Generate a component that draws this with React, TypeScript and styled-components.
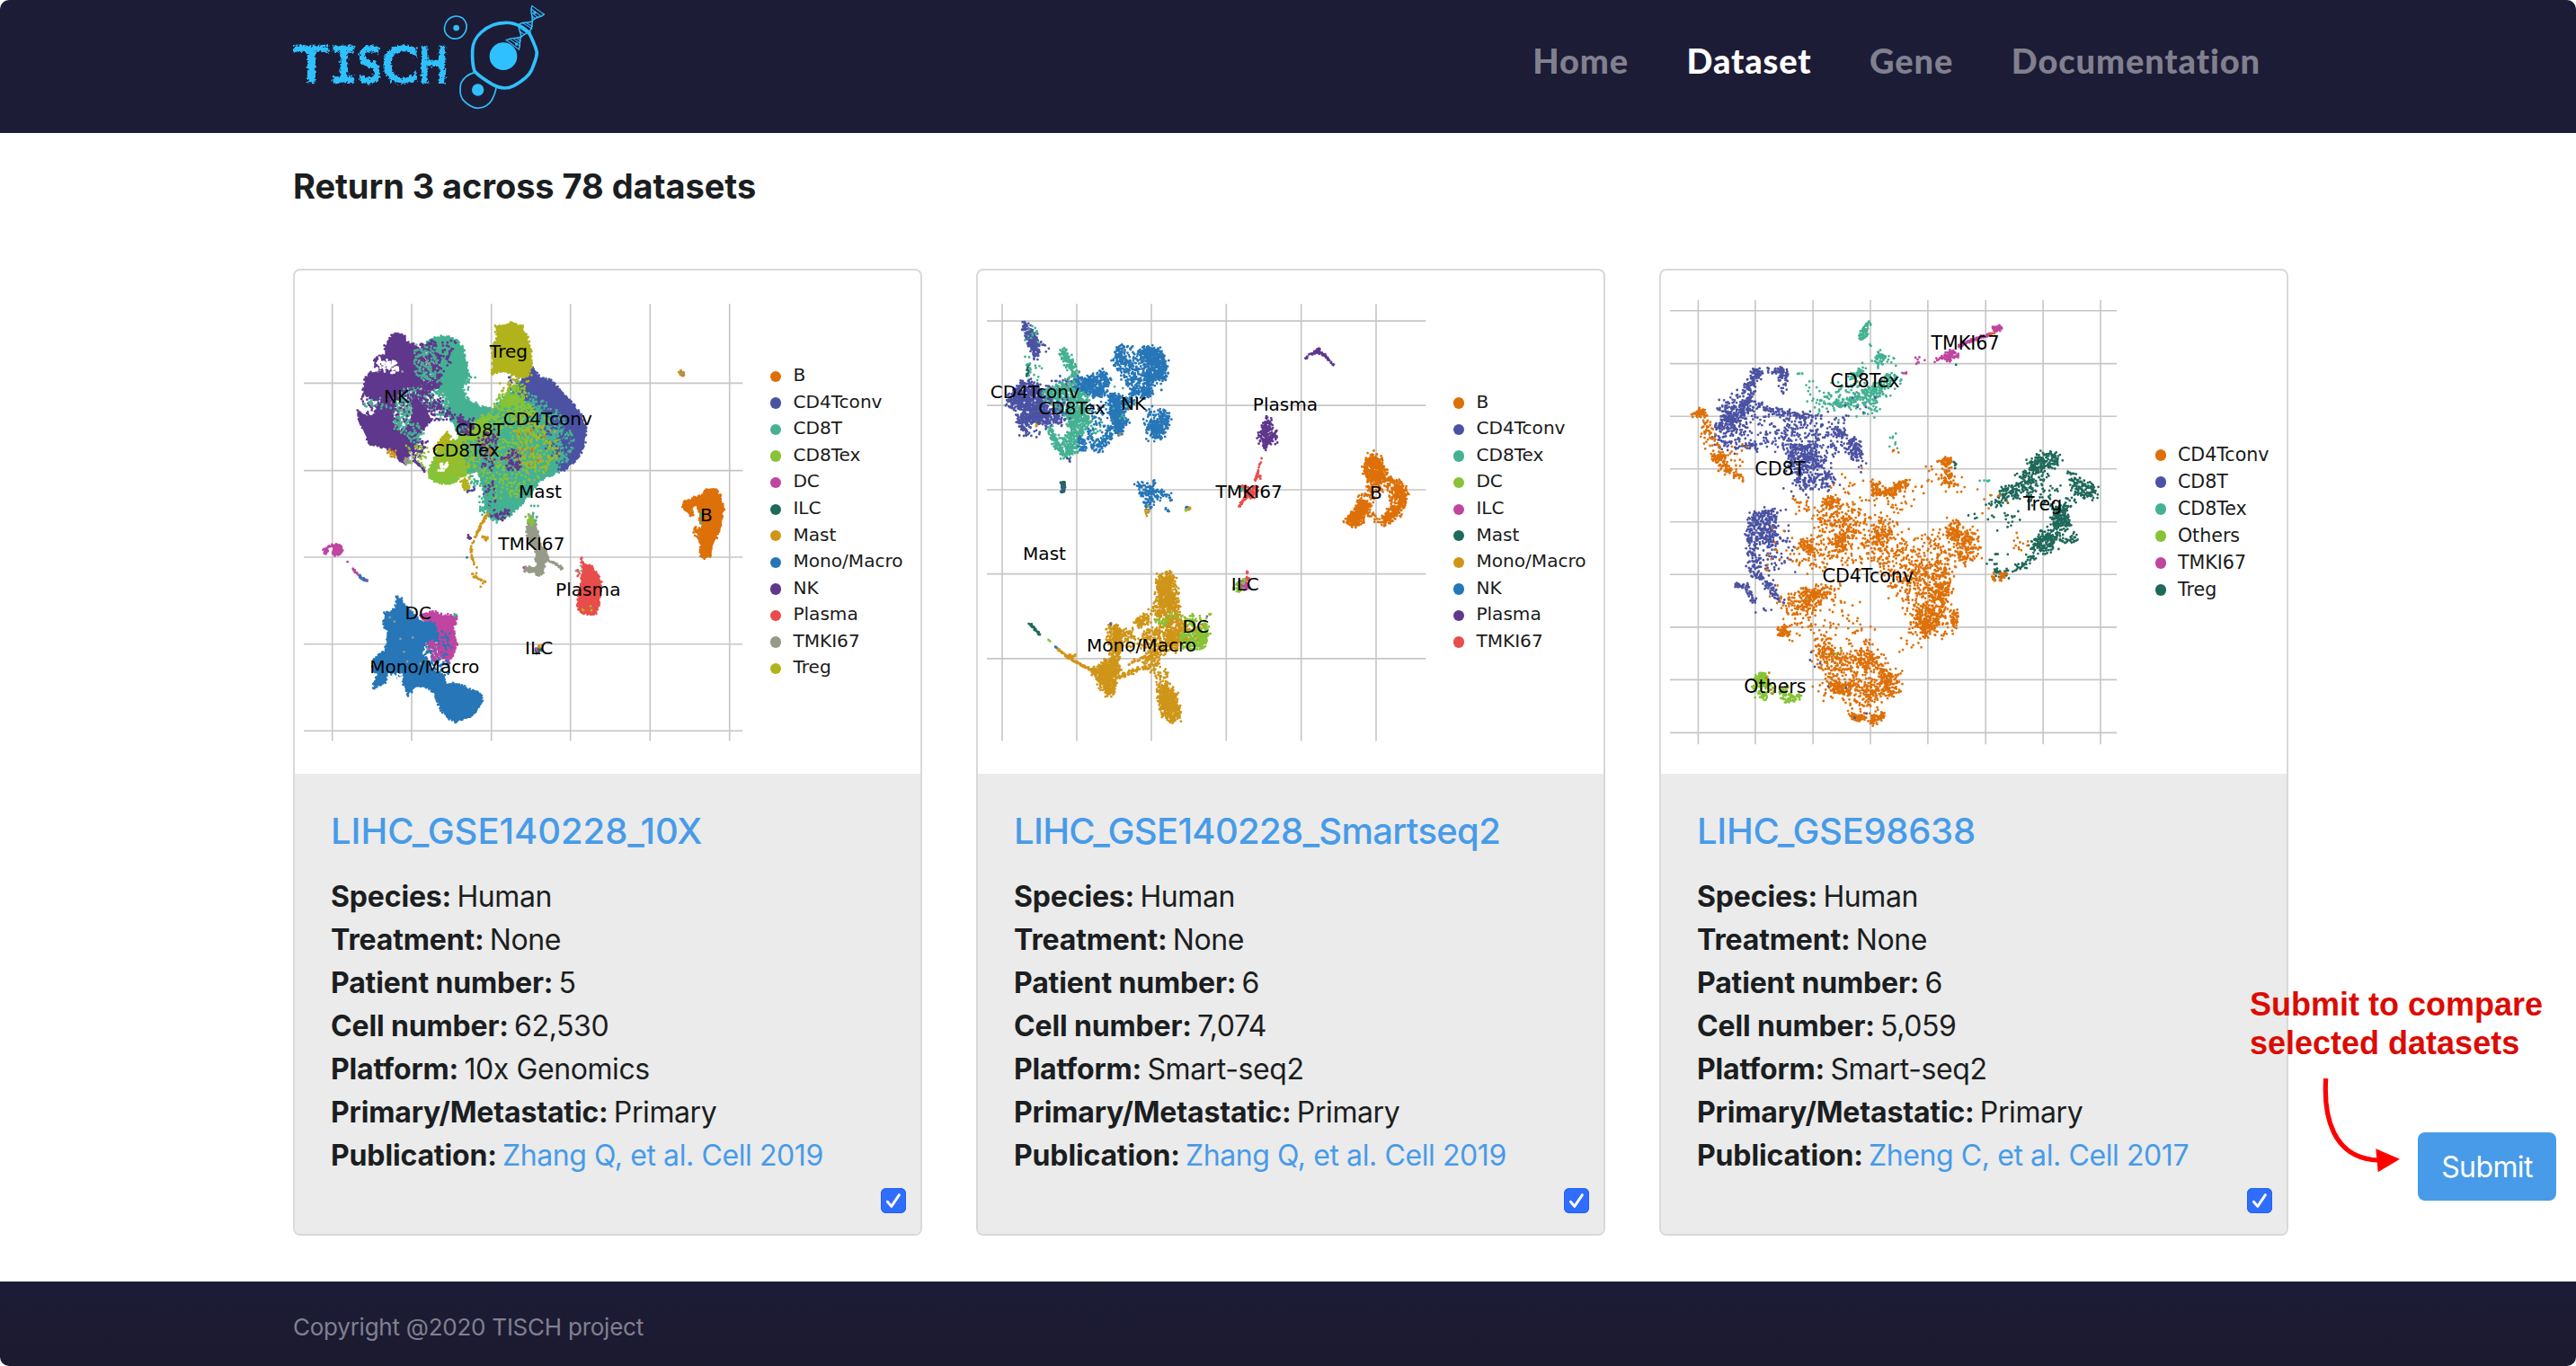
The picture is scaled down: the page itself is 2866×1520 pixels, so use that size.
import React from 'react';
import styled, { createGlobalStyle } from 'styled-components';

const NAVY = '#1d1c36';
const BLUE = '#479be8';
const INK = '#1b1e21';
const SANS = `Inter, 'Liberation Sans', sans-serif`;

/* ---------- palette ---------- */
const C = {
  orange: '#dd7008',
  indigo: '#4b52a3',
  teal: '#45b193',
  green: '#87c336',
  magenta: '#bf45a0',
  pine: '#1f695a',
  gold: '#cf9518',
  blue: '#2676b8',
  purple: '#5f378c',
  red: '#e84d4b',
  grey: '#959b88',
  olive: '#b1b31c',
  white: '#ffffff',
};

/* ---------- scatter engine ---------- */
type Pt = [number, number];
type Layer = { kind: 'solid' | 'dots' | 'line'; color: string; pts: Pt[]; n: number; j: number };

const parse = (s: string): Pt[] => s.trim().split(/\s+/).map((p) => p.split(',').map(Number) as Pt);
/* solid: a filled cloud with a rough rim; dots: cells spread in an area; line: cells along a trail */
const S = (color: string, s: string, j = 5): Layer => ({ kind: 'solid', color, pts: parse(s), n: 0, j });
const D = (color: string, n: number, s: string): Layer => ({ kind: 'dots', color, pts: parse(s), n, j: 0 });
const L = (color: string, n: number, j: number, s: string): Layer => ({ kind: 'line', color, pts: parse(s), n, j });

function makeRandom(seed: number) {
  let a = seed;
  return () => {
    a = (a + 0x6d2b79f5) | 0;
    let t = Math.imul(a ^ (a >>> 15), 1 | a);
    t = (t + Math.imul(t ^ (t >>> 7), 61 | t)) ^ t;
    return ((t ^ (t >>> 14)) >>> 0) / 4294967296;
  };
}

function inside(x: number, y: number, poly: Pt[]) {
  let hit = false;
  for (let i = 0, k = poly.length - 1; i < poly.length; k = i++) {
    const [xi, yi] = poly[i];
    const [xk, yk] = poly[k];
    if (yi > y !== yk > y && x < ((xk - xi) * (y - yi)) / (yk - yi) + xi) hit = !hit;
  }
  return hit;
}

function along(pts: Pt[], n: number, j: number, closed: boolean, rnd: () => number): Pt[] {
  const path = closed ? [...pts, pts[0]] : pts;
  const lens = path.slice(1).map((p, i) => Math.hypot(p[0] - path[i][0], p[1] - path[i][1]));
  const total = lens.reduce((a, b) => a + b, 0);
  const count = n || Math.round(total / 4.5);
  const out: Pt[] = [];
  for (let q = 0; q < count; q++) {
    let d = rnd() * total;
    let i = 0;
    while (i < lens.length - 1 && d > lens[i]) d -= lens[i++];
    const t = d / (lens[i] || 1);
    const g = () => (rnd() + rnd() - 1) * j;
    out.push([path[i][0] + (path[i + 1][0] - path[i][0]) * t + g(), path[i][1] + (path[i + 1][1] - path[i][1]) * t + g()]);
  }
  return out;
}

function scatter(layer: Layer, spread: number, rnd: () => number): Pt[] {
  if (layer.kind !== 'dots') return along(layer.pts, layer.n, layer.j, layer.kind === 'solid', rnd);
  const xs = layer.pts.map((p) => p[0]);
  const ys = layer.pts.map((p) => p[1]);
  const [x0, x1, y0, y1] = [Math.min(...xs), Math.max(...xs), Math.min(...ys), Math.max(...ys)];
  /* small areas stay crisp, large ones get soft borders */
  const soft = Math.min(spread, Math.min(x1 - x0, y1 - y0) * 0.25);
  const g = () => (rnd() + rnd() + rnd() - 1.5) * soft;
  const out: Pt[] = [];
  let guard = 0;
  while (out.length < layer.n && guard++ < layer.n * 30) {
    const x = x0 + rnd() * (x1 - x0);
    const y = y0 + rnd() * (y1 - y0);
    if (inside(x, y, layer.pts)) out.push([x + g(), y + g()]);
  }
  return out;
}

/* ---------- plot data ---------- */
type Label = [string, number, number];
type Plot = {
  sx: number;
  font: number;
  seed: number;
  spread: number;
  frame: [number, number, number, number];
  v: number[];
  h: number[];
  layers: Layer[];
  labels: Label[];
};

const plot10x: Plot = {
  sx: 3,
  font: 20.1,
  seed: 11,
  spread: 8,
  frame: [54, 1519, 134, 1497],
  v: [149, 414, 680, 944, 1210, 1475],
  h: [382, 654, 924, 1195, 1465],
  layers: [
    S(C.teal, '490,238 530,236 565,248 585,275 598,320 602,345 585,385 578,405 590,430 640,455 690,465 720,430 760,400 800,380 850,430 900,520 945,590 925,650 840,685 815,720 780,760 740,795 700,812 675,800 655,730 645,680 600,600 560,520 535,480 540,430 505,400 495,360 510,330 490,290 460,262'),
    S(C.indigo, '815,335 840,362 880,375 910,405 950,445 980,480 996,525 990,575 965,620 920,655 905,650 930,600 900,560 905,520 870,480 820,440 770,415 745,400 785,370'),
    D(C.teal, 330, '780,410 830,420 880,450 930,500 960,560 940,620 900,640 840,560 790,470'),
    D(C.indigo, 120, '760,400 860,420 930,500 970,560 910,650 840,560 790,480'),
    D(C.indigo, 40, '740,350 810,320 840,360 800,390 740,400'),
    S(C.olive, '693,203 720,200 740,194 780,203 798,235 812,280 815,325 800,362 762,358 725,342 684,352 685,320 683,270 700,240'),
    D(C.olive, 34, '720,345 830,320 800,390 740,420 710,430'),
    D(C.green, 40, '690,440 750,370 800,380 790,440 700,480'),
    S(C.green, '715,440 755,420 790,440 770,470 715,500 690,520 670,550 665,590 630,620 640,650 600,665 570,675 555,695 520,694 490,685 468,668 485,625 500,590 520,560 560,560 600,530 640,490 690,480'),
    D(C.green, 110, '690,440 760,380 800,400 790,440 700,480'),
    D(C.green, 420, '640,480 760,430 850,520 900,600 840,680 760,740 690,740 640,650'),
    D(C.green, 160, '720,440 800,430 830,480 740,500'),
    D(C.teal, 90, '690,450 790,440 800,500 700,560 670,520'),
    D(C.olive, 110, '790,460 900,520 920,600 860,660 780,660 740,520'),
    D(C.olive, 90, '540,560 660,560 640,660 580,690 490,660'),
    S(C.olive, '500,570 532,534 545,545 535,575 510,590', 4),
    S(C.olive, '585,680 600,690 605,715 592,718 585,700', 4),
    L(C.indigo, 10, 5, '600,722 625,708'),
    D(C.teal, 40, '600,640 650,640 645,700 610,700'),
    D(C.teal, 90, '590,560 660,560 660,640 600,660'),
    D(C.olive, 14, '470,590 540,560 500,640'),
    D(C.white, 26, '508,632 535,628 528,652 505,652'),
    D(C.purple, 90, '640,540 700,520 690,660 650,640 640,590'),
    D(C.purple, 70, '710,600 770,590 780,655 730,660'),
    D(C.purple, 40, '650,690 690,690 700,800 670,790'),
    D(C.purple, 30, '690,790 740,770 735,790 700,810'),
    D(C.purple, 70, '560,480 620,490 620,540 580,540'),
    D(C.teal, 70, '640,740 690,700 680,790 650,790'),
    D(C.orange, 14, '640,560 880,500 860,680 680,660'),
    D(C.grey, 20, '600,570 860,600 840,700 640,680'),
    D(C.teal, 60, '575,350 610,345 620,375 590,400 600,430 640,450 580,440'),
    D(C.teal, 230, '400,390 520,370 550,470 530,500 450,460'),
    D(C.teal, 190, '350,430 410,400 420,480 400,560 360,520'),
    S(C.purple, '340,242 356,228 385,228 398,255 420,262 440,285 445,320 435,345 455,365 440,385 400,395 380,420 330,430 290,432 252,415 258,375 275,348 300,350 315,340 288,325 292,305 325,295 325,270'),
    S(C.purple, '236,462 245,480 290,485 300,450 330,430 350,450 350,500 375,540 400,520 415,500 420,450 415,430 440,440 460,460 480,495 450,530 430,550 430,575 405,600 402,632 385,632 350,592 300,577 275,572 255,535 240,500'),
    D(C.white, 60, '340,312 368,312 375,340 350,348 325,340 328,325'),
    D(C.white, 18, '297,318 310,308 325,320 318,338'),
    D(C.purple, 130, '340,410 430,390 440,450 400,560 350,520'),
    D(C.purple, 44, '245,425 330,420 320,470 250,475'),
    D(C.teal, 40, '345,410 400,400 415,480 400,560 355,520'),
    D(C.purple, 620, '420,270 490,252 505,300 505,390 450,420 420,380'),
    D(C.purple, 60, '480,250 560,250 540,330 500,390'),
    D(C.purple, 120, '420,400 520,430 560,500 470,500 420,450'),
    D(C.purple, 80, '390,560 470,560 440,620 390,600'),
    D(C.teal, 130, '420,280 500,262 500,380 430,360'),
    D(C.teal, 40, '400,510 450,510 440,570 400,560'),
    D(C.teal, 20, '250,440 330,420 330,460 270,460'),
    L(C.purple, 30, 7, '530,470 560,490 620,520'),
    L(C.purple, 26, 5, '422,622 458,655'),
    L(C.purple, 24, 8, '365,600 400,632'),
    D(C.gold, 22, '335,590 360,598 355,612 340,606'),
    D(C.grey, 22, '385,625 410,615 410,632 395,638'),
    D(C.green, 28, '400,580 480,570 460,650 410,620'),
    D(C.grey, 10, '330,260 480,260 460,600 340,560'),
    L(C.gold, 66, 4, '670,785 645,825 625,865 612,895 616,930 626,945'),
    L(C.gold, 26, 5, '618,975 635,992 664,1003'),
    D(C.gold, 10, '650,860 665,862 664,876'),
    D(C.gold, 5, '625,905 640,950 655,1020 650,1025 625,955'),
    L(C.purple, 8, 4, '600,856 612,868'),
    L(C.blue, 1, 1, '598,925 599,926'),
    S(C.grey, '808,790 820,800 832,830 842,880 862,905 868,930 858,945 855,970 840,983 820,968 790,968 790,955 832,955 828,900 800,860 800,830', 4),
    L(C.grey, 34, 4, '865,935 895,945 918,962'),
    D(C.green, 16, '800,790 830,800 825,830 800,820'),
    D(C.teal, 8, '815,740 845,780 835,810 815,790'),
    L(C.magenta, 1, 1, '787,956 788,957'),
    S(C.red, '978,925 990,942 1010,950 1035,975 1046,1000 1044,1030 1040,1070 1028,1100 990,1100 970,1090 970,1050 982,1000 988,965', 4),
    D(C.grey, 5, '962,950 980,955 985,975 960,968'),
    D(C.red, 6, '965,960 985,965 985,1010 970,1000'),
    D(C.olive, 5, '972,1090 1020,1075 1015,1100'),
    S(C.magenta, '150,885 170,884 184,890 182,910 160,920 145,905 122,915 122,900 135,892', 4),
    D(C.white, 12, '135,900 145,897 150,915 135,915'),
    L(C.magenta, 1, 1, '199,938 200,939'),
    L(C.magenta, 30, 3, '218,960 245,990 275,1000'),
    L(C.blue, 12, 4, '238,980 262,1000'),
    S(C.magenta, '440,1110 480,1092 515,1105 560,1106 562,1125 550,1150 566,1190 552,1230 530,1250 505,1215 498,1180 480,1130'),
    D(C.magenta, 70, '470,1190 520,1190 540,1250 480,1250'),
    S(C.blue, '365,1050 380,1052 388,1075 415,1095 440,1125 490,1130 500,1160 500,1182 460,1190 450,1225 470,1270 520,1290 530,1318 570,1320 640,1350 648,1368 630,1410 600,1425 560,1435 535,1425 510,1395 490,1350 470,1330 430,1328 415,1340 402,1352 392,1330 380,1300 340,1300 320,1320 288,1330 290,1310 300,1290 285,1265 290,1240 325,1215 335,1190 335,1155 320,1130 325,1100 362,1085'),
    D(C.blue, 110, '450,1190 520,1180 540,1260 540,1310 470,1300'),
    D(C.magenta, 40, '470,1180 520,1190 510,1260 470,1240'),
    D(C.white, 34, '335,1290 380,1290 380,1310 340,1310'),
    D(C.blue, 14, '500,1130 545,1160 540,1230'),
    D(C.grey, 8, '330,1090 460,1190 480,1260 400,1250'),
    S(C.orange, '1400,710 1430,714 1446,738 1455,770 1448,810 1436,850 1418,890 1412,920 1392,928 1378,920 1378,880 1382,830 1375,790 1362,762 1345,765 1338,785 1318,768 1325,750 1350,742 1385,730', 4),
    D(C.orange, 22, '1338,765 1352,770 1352,800 1340,795'),
    D(C.orange, 36, '1355,830 1380,835 1380,880 1358,860'),
    D(C.teal, 4, '1365,785 1382,780 1385,835'),
    D(C.gold, 20, '1308,345 1322,345 1322,358 1308,358'),
    D(C.orange, 6, '1308,345 1322,345 1322,358 1308,358'),
    D(C.grey, 5, '1310,348 1320,348 1320,356 1310,356'),
    D(C.pine, 16, '828,1208 845,1208 845,1222 828,1222'),
    D(C.magenta, 5, '824,1206 834,1206 834,1214 824,1214'),
    D(C.gold, 5, '838,1196 848,1196 846,1206 838,1206'),
    D(C.teal, 3, '556,1094 563,1094 563,1114 556,1114'),
  ],
  labels: [
    ['Treg', 738, 303], ['NK', 363, 443], ['CD4Tconv', 868, 513], ['CD8T', 641, 546], ['CD8Tex', 595, 611],
    ['Mast', 843, 740], ['B', 1398, 812], ['TMKI67', 814, 901], ['Plasma', 1003, 1045], ['DC', 436, 1116],
    ['ILC', 839, 1227], ['Mono/Macro', 457, 1285],
  ],
};

const plotSmart: Plot = {
  sx: 3,
  font: 20.1,
  seed: 23,
  spread: 12,
  frame: [54, 1519, 134, 1497],
  v: [105, 354, 603, 853, 1103, 1353],
  h: [188, 451, 714, 976, 1240],
  layers: [
    D(C.indigo, 190, '172,200 185,195 205,220 225,240 232,275 215,308 205,300 195,265 180,225'),
    D(C.teal, 14, '170,200 230,225 235,260 190,250'),
    D(C.pine, 14, '187,322 194,322 192,360 184,358'),
    D(C.teal, 16, '200,310 250,340 240,370 190,380 185,300'),
    D(C.indigo, 8, '160,230 280,270 270,305 240,280'),
    D(C.indigo, 620, '172,375 210,380 240,400 250,440 255,480 225,490 190,470 130,458 120,440 140,410'),
    D(C.indigo, 170, '155,480 230,470 230,505 190,510 190,550 175,540'),
    D(C.indigo, 120, '210,480 300,460 310,510 250,520'),
    D(C.indigo, 70, '250,380 350,345 370,370 400,370 380,410 270,420'),
    D(C.indigo, 10, '190,510 270,520 240,550 200,545'),
    D(C.teal, 130, '290,283 305,276 325,295 345,325 358,360 335,360 320,320'),
    D(C.teal, 520, '250,400 340,370 385,385 390,430 395,480 350,500 300,470 240,440'),
    D(C.teal, 360, '320,470 400,490 380,530 360,560 360,600 320,605 300,560 330,530'),
    D(C.teal, 120, '262,510 280,540 300,580 330,600 310,608 285,575 265,540'),
    D(C.teal, 26, '380,490 440,500 410,560 370,540'),
    D(C.indigo, 50, '240,420 330,430 330,510 250,500'),
    D(C.blue, 150, '485,275 512,260 518,300 545,320 560,338 520,342 480,340 470,325 485,305'),
    D(C.blue, 520, '570,275 615,272 640,290 652,320 650,375 620,372 600,380 580,360 595,340 575,310'),
    D(C.blue, 60, '520,265 580,270 590,340 540,340'),
    D(C.blue, 150, '500,340 590,340 600,400 590,430 560,420 530,400 510,380'),
    D(C.blue, 80, '580,370 610,380 600,430 570,430'),
    D(C.blue, 300, '370,380 400,360 450,345 465,380 440,425 410,420 385,405'),
    D(C.blue, 90, '350,360 400,370 390,410 350,400'),
    D(C.blue, 420, '460,420 490,420 500,470 518,500 500,542 480,520 465,480 470,440'),
    D(C.blue, 100, '490,430 560,400 550,430 510,480'),
    D(C.blue, 110, '440,560 455,530 475,515 470,545 450,570 440,590 410,592 400,575 430,570'),
    D(C.blue, 60, '400,440 460,440 460,500 440,560 370,580 400,500'),
    D(C.blue, 46, '360,540 385,560 385,592 360,590'),
    D(C.blue, 270, '618,470 655,475 662,495 650,530 620,555 605,540 590,515 620,500'),
    D(C.blue, 30, '585,460 620,450 610,560 583,550'),
    D(C.teal, 12, '440,380 560,400 540,500 450,500'),
    L(C.blue, 2, 2, '636,402 637,403'),
    D(C.gold, 3, '214,508 222,508 220,516'),
    D(C.gold, 2, '496,540 502,540 500,548'),
    D(C.indigo, 5, '315,610 332,622 328,626'),
    D(C.pine, 44, '303,690 313,685 317,722 302,722'),
    D(C.indigo, 4, '300,700 315,705 306,718'),
    D(C.blue, 160, '560,685 580,695 600,700 640,720 665,732 665,745 630,735 605,765 598,788 590,765 575,755 590,735 562,730'),
    D(C.blue, 6, '608,680 616,684 612,700'),
    D(C.blue, 6, '650,770 662,780 656,786'),
    D(C.gold, 9, '570,765 600,770 600,798 590,792'),
    D(C.gold, 12, '718,768 734,770 728,778'),
    D(C.green, 3, '714,778 722,778 718,784'),
    D(C.blue, 3, '718,768 724,768 724,774'),
    L(C.purple, 56, 4, '1117,306 1130,293 1158,284 1185,297 1211,326'),
    D(C.purple, 24, '1145,285 1160,271 1168,290'),
    D(C.purple, 210, '990,486 996,500 1008,520 1017,545 1012,570 995,568 992,580 976,580 972,560 960,550 970,525 982,505'),
    L(C.red, 5, 3, '973,612 964,640'),
    L(C.red, 28, 3, '962,645 950,685'),
    D(C.red, 8, '955,675 968,668 965,684'),
    D(C.red, 120, '905,700 930,715 955,700 950,730 920,735'),
    L(C.red, 30, 4, '920,735 896,766'),
    D(C.teal, 4, '900,700 912,705 906,728'),
    D(C.orange, 400, '1342,597 1350,606 1372,615 1378,645 1385,680 1360,690 1340,690 1318,672 1316,640 1326,615'),
    D(C.orange, 70, '1335,690 1400,672 1440,690 1400,705 1360,720'),
    D(C.orange, 190, '1415,695 1440,697 1455,725 1448,765 1430,760 1425,740 1410,720'),
    D(C.orange, 180, '1372,810 1400,775 1440,765 1425,795 1405,814 1370,818'),
    D(C.orange, 40, '1398,705 1430,735 1430,770 1395,775'),
    D(C.orange, 300, '1310,735 1332,765 1310,790 1298,815 1280,830 1256,815 1262,795 1290,770 1298,745'),
    D(C.orange, 34, '1300,790 1360,780 1365,815 1300,820'),
    D(C.orange, 30, '1320,700 1345,700 1345,750 1320,740'),
    D(C.magenta, 60, '900,998 930,1000 932,1022 905,1026 898,1010'),
    D(C.green, 36, '882,1005 912,990 905,1025 882,1038'),
    D(C.red, 4, '918,970 926,970 922,976'),
    D(C.red, 6, '918,985 930,990 926,998'),
    L(C.pine, 34, 4, '195,1130 230,1165'),
    L(C.green, 2, 2, '247,1175 265,1186'),
    L(C.blue, 5, 3, '283,1203 288,1208'),
    L(C.gold, 110, 4, '288,1208 330,1240 400,1274 425,1285'),
    D(C.gold, 14, '325,1230 350,1226 345,1245'),
    D(C.gold, 460, '440,1250 490,1240 495,1290 480,1325 478,1355 455,1350 430,1315 420,1285'),
    D(C.gold, 60, '400,1270 440,1265 430,1300 410,1295'),
    D(C.gold, 160, '462,1135 485,1135 500,1160 500,1200 480,1200 475,1160'),
    D(C.gold, 70, '460,1140 545,1160 520,1190 450,1200'),
    D(C.gold, 80, '475,1200 500,1200 490,1260 465,1250'),
    L(C.blue, 3, 3, '465,1132 468,1134'),
    D(C.gold, 400, '640,978 668,972 682,1000 690,1040 690,1080 660,1085 625,1060 618,1000'),
    D(C.gold, 180, '610,1060 690,1070 700,1110 650,1130 600,1100'),
    D(C.gold, 80, '540,1130 570,1105 600,1105 595,1130 560,1140'),
    D(C.gold, 180, '655,1110 710,1110 712,1160 680,1210 660,1170'),
    D(C.gold, 280, '570,1160 660,1130 690,1180 690,1215 640,1220 610,1245 590,1240 600,1200'),
    D(C.gold, 60, '500,1150 600,1150 590,1210 510,1210'),
    L(C.gold, 34, 8, '500,1300 520,1280 545,1245 600,1235'),
    L(C.gold, 34, 8, '515,1295 550,1273 600,1270'),
    D(C.gold, 70, '570,1230 640,1220 620,1290 580,1265'),
    D(C.gold, 50, '615,1290 655,1270 660,1340 630,1340'),
    D(C.gold, 490, '630,1330 655,1330 685,1350 698,1390 692,1432 670,1436 645,1420 632,1385'),
    D(C.green, 70, '700,1110 730,1104 790,1125 795,1150 760,1150 710,1130'),
    D(C.green, 280, '700,1165 735,1150 790,1150 785,1190 760,1205 710,1200'),
    D(C.green, 26, '615,1120 655,1115 655,1138 625,1135'),
    D(C.green, 9, '660,1090 705,1090 700,1115 660,1110'),
    D(C.gold, 18, '700,1130 780,1130 770,1190 710,1180'),
    L(C.green, 3, 3, '786,1102 803,1103'),
    L(C.magenta, 1, 1, '789,1108 790,1108'),
  ],
  labels: [
    ['CD4Tconv', 214, 427], ['CD8Tex', 338, 479], ['NK', 543, 466], ['Plasma', 1050, 467], ['TMKI67', 929, 738],
    ['B', 1353, 743], ['Mast', 246, 932], ['ILC', 916, 1028], ['DC', 751, 1159], ['Mono/Macro', 570, 1219],
  ],
};

const plotZheng: Plot = {
  sx: 2.958,
  font: 20.6,
  seed: 37,
  spread: 30,
  frame: [53, 1524, 123, 1507],
  v: [146, 334, 524, 713, 902, 1092, 1281, 1470],
  h: [156, 321, 485, 649, 814, 978, 1142, 1306, 1471],
  layers: [
    D(C.teal, 60, '700,182 710,190 700,230 690,248 674,242 685,215'),
    D(C.teal, 50, '725,285 750,285 792,318 760,312 740,330 730,310'),
    D(C.teal, 40, '660,350 690,325 690,345 670,370 640,360'),
    D(C.teal, 90, '740,380 780,345 810,360 780,400 740,415 700,410'),
    D(C.teal, 90, '690,400 750,390 740,430 690,440 670,425'),
    D(C.teal, 60, '590,435 665,430 665,455 590,455'),
    D(C.teal, 100, '530,430 580,395 640,360 700,400 680,450 540,470'),
    D(C.teal, 30, '680,430 745,430 745,490 700,495'),
    D(C.teal, 14, '500,375 540,360 560,500 520,480'),
    D(C.teal, 12, '560,470 620,495 790,430 840,350 800,320 770,380 690,470'),
    L(C.teal, 4, 10, '465,352 490,352'),
    L(C.teal, 2, 4, '708,260 714,266'),
    D(C.teal, 8, '780,530 795,535 805,590 765,580'),
    D(C.magenta, 54, '1115,210 1140,203 1145,214 1118,222'),
    L(C.magenta, 80, 7, '1000,268 1040,250 1110,228'),
    D(C.magenta, 70, '955,300 975,280 998,288 1000,300 970,312'),
    D(C.magenta, 16, '920,305 960,288 965,308 925,312'),
    D(C.magenta, 7, '860,300 900,310 860,325'),
    L(C.magenta, 4, 4, '822,352 832,350'),
    L(C.orange, 3, 6, '1100,240 1125,225'),
    L(C.pine, 1, 1, '994,324 995,324'),
    D(C.indigo, 60, '320,350 335,335 360,345 350,365 320,365'),
    D(C.indigo, 50, '400,345 430,325 440,350 430,380 415,370'),
    D(C.indigo, 20, '360,335 450,335 450,355 380,355'),
    D(C.indigo, 9, '410,380 445,400 440,435 390,420'),
    D(C.indigo, 80, '305,370 335,370 330,430 300,455 290,420'),
    D(C.indigo, 170, '225,450 270,445 320,440 320,470 270,490 250,520 215,515'),
    D(C.indigo, 12, '225,430 300,400 290,450'),
    D(C.indigo, 140, '205,500 290,480 290,580 230,590 200,550'),
    D(C.indigo, 30, '290,565 345,570 340,590 290,580'),
    D(C.indigo, 120, '290,460 420,470 480,480 440,590 350,580 280,540'),
    L(C.indigo, 90, 15, '340,450 400,470 480,485 540,485'),
    D(C.indigo, 160, '440,480 540,490 620,520 660,580 600,590 480,600 430,560'),
    D(C.indigo, 50, '590,525 630,525 630,560 600,545'),
    D(C.indigo, 100, '625,560 670,555 682,620 650,625 640,590'),
    D(C.indigo, 300, '440,600 530,590 570,640 590,690 540,700 480,700 460,650'),
    D(C.indigo, 90, '440,570 540,570 540,620 450,620'),
    D(C.indigo, 24, '430,690 600,680 570,730 430,740'),
    D(C.indigo, 16, '540,490 720,430 710,480 600,520'),
    D(C.indigo, 5, '630,650 720,620 700,670'),
    D(C.orange, 46, '125,475 150,460 172,465 170,490 125,485'),
    D(C.orange, 34, '155,495 180,495 200,540 180,570 165,545'),
    D(C.orange, 24, '160,540 200,550 235,600 200,610'),
    D(C.orange, 90, '200,600 230,600 240,630 275,665 260,665 200,630'),
    D(C.orange, 20, '250,645 300,675 300,690 260,668'),
    D(C.orange, 14, '230,580 290,560 300,660 250,630'),
    L(C.indigo, 70, 24, '320,810 380,785 395,820'),
    D(C.indigo, 190, '315,800 375,790 410,850 400,890 360,880 320,840'),
    D(C.indigo, 60, '310,820 340,850 340,930 305,920'),
    D(C.indigo, 60, '310,900 350,920 345,1010 310,960'),
    D(C.indigo, 60, '400,850 450,860 430,960 400,1000 340,960 380,900'),
    L(C.indigo, 26, 9, '265,1010 310,1020'),
    L(C.indigo, 30, 10, '300,1010 330,1065'),
    L(C.indigo, 60, 16, '350,980 380,1020 425,1070'),
    L(C.indigo, 5, 14, '375,1090 340,1085 420,1080'),
    D(C.indigo, 10, '390,755 480,770 480,1000 440,960 400,800'),
    D(C.orange, 18, '380,760 450,760 430,1080 350,1080'),
    /* broad haze of CD4Tconv cells behind the denser knots */
    D(C.orange, 300, '520,780 620,740 700,780 790,820 830,900 900,900 960,960 900,1010 820,980 720,940 620,960 480,970 460,890 560,860'),
    D(C.orange, 120, '890,850 1000,815 1065,850 1060,920 1000,950 970,1050 870,1060 850,980'),
    D(C.orange, 110, '430,1050 600,1010 620,1090 600,1180 540,1200 430,1170'),
    D(C.orange, 150, '540,1200 720,1200 800,1290 800,1360 590,1350 560,1280'),
    D(C.orange, 50, '555,740 610,740 600,770 560,775'),
    D(C.orange, 16, '450,740 540,740 530,780 480,780'),
    D(C.orange, 14, '570,690 600,680 700,650 680,700 620,740'),
    D(C.orange, 80, '525,790 600,745 680,760 660,850 600,820 540,830'),
    D(C.orange, 50, '715,690 740,690 750,730 720,735'),
    D(C.orange, 54, '745,715 790,705 800,735 770,740'),
    D(C.orange, 54, '790,700 840,680 840,705 795,720'),
    D(C.orange, 34, '700,730 860,700 900,640 880,740 780,770 700,770'),
    D(C.orange, 60, '935,630 965,610 985,625 970,645'),
    D(C.orange, 54, '950,650 980,650 985,705 955,690'),
    D(C.orange, 26, '900,640 950,630 940,660 1010,660 1010,720 880,670'),
    D(C.orange, 70, '590,860 630,840 630,910 600,900'),
    D(C.orange, 110, '580,790 700,800 790,840 780,880 700,890 620,940 570,870'),
    D(C.orange, 60, '720,830 780,840 770,880 720,870'),
    D(C.orange, 50, '480,870 520,870 525,900 480,900'),
    D(C.orange, 40, '460,880 560,850 600,880 600,940 470,970'),
    D(C.orange, 60, '720,880 830,900 850,960 800,980 740,950'),
    D(C.orange, 20, '640,770 830,770 800,850 700,830'),
    D(C.orange, 16, '780,820 900,840 900,920 830,900'),
    D(C.orange, 80, '960,830 1000,810 1010,860 970,870'),
    D(C.orange, 140, '990,860 1060,840 1065,900 1060,925 1010,940 990,900'),
    D(C.orange, 40, '890,860 980,830 990,960 900,960'),
    D(C.orange, 70, '850,940 960,950 970,1000 900,1010 850,990'),
    D(C.orange, 80, '780,960 870,960 870,1040 780,1060'),
    D(C.orange, 80, '930,1000 970,1000 970,1060 930,1060'),
    D(C.orange, 80, '880,1010 950,1010 950,1070 880,1070'),
    D(C.orange, 190, '860,1080 960,1060 950,1110 910,1150 870,1130'),
    D(C.orange, 80, '870,1120 915,1120 915,1160 885,1175'),
    D(C.orange, 70, '950,1060 1000,1090 1000,1140 950,1180 920,1150'),
    D(C.orange, 22, '980,1100 1003,1100 998,1135 985,1135'),
    D(C.orange, 26, '810,1040 870,1060 870,1170 840,1130'),
    D(C.orange, 16, '840,1150 880,1160 870,1210 800,1240'),
    D(C.orange, 130, '430,1060 480,1030 590,1010 600,1030 530,1060 510,1110 450,1100'),
    D(C.orange, 60, '500,1030 560,1025 540,1060 480,1090'),
    D(C.orange, 60, '405,1150 435,1140 442,1165 405,1170'),
    D(C.orange, 26, '600,1060 680,1100 740,1190 650,1190 620,1130'),
    D(C.orange, 70, '525,1190 570,1180 600,1240 550,1250'),
    D(C.orange, 80, '560,1240 640,1230 650,1280 600,1290 590,1340 560,1280'),
    D(C.orange, 110, '580,1310 650,1320 650,1350 590,1345'),
    D(C.orange, 120, '640,1230 710,1210 760,1250 760,1290 700,1260 660,1280'),
    D(C.orange, 50, '600,1280 740,1290 720,1340 640,1330'),
    D(C.orange, 130, '740,1270 790,1290 810,1340 770,1355 745,1320'),
    D(C.orange, 80, '650,1330 740,1325 790,1355 700,1370'),
    D(C.orange, 36, '610,1360 760,1370 750,1410 640,1400'),
    D(C.orange, 60, '640,1410 690,1410 700,1435 660,1430'),
    D(C.orange, 60, '710,1420 760,1410 740,1445 715,1445'),
    D(C.orange, 10, '510,1290 570,1320 570,1380 520,1360'),
    D(C.orange, 9, '690,1180 710,1180 708,1215 695,1215'),
    D(C.indigo, 8, '510,1190 530,1260 660,1370 715,1400 650,1430 480,1130'),
    D(C.pine, 130, '1240,640 1260,605 1300,600 1335,605 1325,635 1280,655'),
    D(C.pine, 140, '1200,670 1260,630 1300,650 1250,690 1240,730 1210,720'),
    D(C.pine, 80, '1130,730 1150,715 1200,690 1220,710 1180,740 1140,750'),
    D(C.pine, 20, '1095,760 1140,740 1150,760 1110,770'),
    D(C.pine, 44, '1220,690 1330,680 1330,760 1240,770'),
    D(C.pine, 120, '1375,690 1410,680 1455,700 1457,738 1410,735 1370,715'),
    D(C.pine, 14, '1355,655 1385,658 1410,690 1370,680'),
    D(C.pine, 170, '1320,770 1350,760 1365,800 1370,830 1330,850 1310,820'),
    D(C.pine, 12, '1350,740 1410,735 1370,780'),
    D(C.pine, 190, '1250,870 1310,840 1340,860 1300,905 1260,910 1240,930'),
    D(C.pine, 26, '1340,870 1390,850 1390,880 1350,880'),
    L(C.pine, 34, 18, '1250,920 1220,945 1180,965'),
    D(C.pine, 30, '1120,960 1170,960 1165,985 1125,985'),
    D(C.pine, 22, '1030,800 1100,780 1220,790 1200,840 1130,840'),
    D(C.pine, 10, '1090,900 1180,910 1150,960 1100,950'),
    L(C.pine, 7, 8, '985,628 994,642'),
    D(C.orange, 28, '1110,975 1165,975 1165,1002 1115,1000'),
    D(C.orange, 12, '1180,870 1240,850 1200,910'),
    D(C.orange, 9, '1040,680 1170,720 1160,770 1080,790'),
    L(C.teal, 5, 4, '1075,684 1104,688'),
    L(C.orange, 5, 5, '775,590 806,596'),
    D(C.green, 90, '345,1290 360,1280 375,1305 355,1320 330,1310'),
    D(C.green, 50, '330,1320 370,1310 400,1340 330,1355'),
    D(C.green, 20, '345,1350 375,1350 370,1370 350,1362'),
    D(C.green, 36, '410,1345 440,1330 450,1350 420,1355'),
    D(C.green, 46, '420,1365 440,1360 485,1350 480,1368 440,1380'),
    D(C.orange, 6, '370,1260 400,1340 420,1365 360,1330'),
    L(C.green, 3, 5, '595,1228 626,1212'),
  ],
  labels: [
    ['TMKI67', 1025, 277], ['CD8Tex', 695, 395], ['CD8T', 415, 669], ['Treg', 1280, 777], ['CD4Tconv', 705, 1003], ['Others', 399, 1346],
  ],
};

const PlotSvg = styled.svg`
  display: block;
  flex: none;
  width: 516px;
  height: 560px;
  font-family: 'DejaVu Sans', sans-serif;
`;

function ScatterPlot({ plot }: { plot: Plot }) {
  const rnd = makeRandom(plot.seed);
  const X = (x: number) => +(x / plot.sx).toFixed(1);
  const Y = (y: number) => +(y / 2.8).toFixed(1);
  const [l, r, t, b] = plot.frame;
  return (
    <PlotSvg viewBox="8 11 516 560">
      <g stroke="#c6c6c6" strokeWidth={1.6}>
        {plot.v.map((x) => (
          <line key={x} x1={X(x)} x2={X(x)} y1={Y(t)} y2={Y(b)} />
        ))}
        {plot.h.map((y) => (
          <line key={y} x1={X(l)} x2={X(r)} y1={Y(y)} y2={Y(y)} />
        ))}
      </g>
      <g strokeWidth={2.8} strokeLinecap="round">
        {plot.layers.map((layer, i) => {
          const dots = scatter(layer, plot.spread, rnd)
            .map(([x, y]) => `M${X(x)} ${Y(y)}h0`)
            .join('');
          return (
            <g key={i}>
              {layer.kind === 'solid' && (
                <polygon points={layer.pts.map(([x, y]) => `${X(x)},${Y(y)}`).join(' ')} fill={layer.color} />
              )}
              <path d={dots} stroke={layer.color} fill="none" />
            </g>
          );
        })}
      </g>
      <g fontSize={plot.font} textAnchor="middle" fill="#000">
        {plot.labels.map(([text, x, y]) => (
          <text key={text} x={X(x)} y={Y(y)}>
            {text}
          </text>
        ))}
      </g>
    </PlotSvg>
  );
}

/* ---------- page chrome ---------- */
const GlobalStyle = createGlobalStyle`
  *, *::before, *::after { box-sizing: border-box; }
  body { margin: 0; background: #fff; color: ${INK}; font-family: ${SANS}; }
`;

const Page = styled.div`
  position: relative;
  display: flex;
  flex-direction: column;
  width: 2866px;
  height: 1520px;
  overflow: hidden;
  border-radius: 10px;
  background: #fff;
`;

const Header = styled.header`
  display: flex;
  flex: none;
  align-items: flex-start;
  justify-content: space-between;
  height: 148px;
  padding: 0 351px 0 326px;
  background: ${NAVY};
`;

const Nav = styled.nav`
  display: flex;
  gap: 64.5px;
  padding-top: 44px;
`;

const NavLink = styled.a<{ $active?: boolean }>`
  color: ${(p) => (p.$active ? '#fff' : '#81808f')};
  font: 900 38px/46px Lato, sans-serif;
  letter-spacing: 0.9px;
  text-decoration: none;
`;

const Main = styled.main`
  display: flex;
  flex: 1;
  flex-direction: column;
  padding: 36px 320px 0 326px;
`;

const Heading = styled.h1`
  margin: 0;
  height: 115px;
  font-size: 38px;
  font-weight: 700;
  line-height: 46px;
  letter-spacing: -0.06px;
`;

const Grid = styled.section`
  display: grid;
  grid-template-columns: repeat(3, 700px);
  gap: 60px;
`;

const Card = styled.article`
  display: flex;
  flex-direction: column;
  height: 1076px;
  overflow: hidden;
  border: 2px solid #d9d9d9;
  border-radius: 8px;
  background: #fff;
`;

const Figure = styled.div<{ $shift: number }>`
  display: flex;
  flex: none;
  align-items: center;
  gap: ${(p) => p.$shift}px;
  height: 560px;
`;

const Legend = styled.ul<{ $pitch: number; $size: number }>`
  display: flex;
  flex-direction: column;
  margin: 0;
  padding: 1px 0 0;
  list-style: none;
  color: #1a1a1a;
  font-family: 'DejaVu Sans', sans-serif;
  font-size: ${(p) => p.$size}px;
  line-height: ${(p) => p.$pitch}px;
`;

const LegendItem = styled.li<{ $color: string }>`
  display: flex;
  align-items: center;
  gap: 13px;
  white-space: nowrap;

  &::before {
    width: 12.4px;
    height: 12.4px;
    border-radius: 50%;
    background: ${(p) => p.$color};
    content: '';
  }

  span {
    margin-top: -1px;
    margin-bottom: 1px;
  }
`;

const Body = styled.div`
  display: flex;
  flex: 1;
  flex-direction: column;
  padding: 40px 16px 23px 40px;
  background: #ebebeb;
`;

const Title = styled.h2<{ $tracking: number }>`
  margin: 0 0 25px;
  color: ${BLUE};
  font-size: 40px;
  font-weight: 500;
  line-height: 48px;
  letter-spacing: ${(p) => p.$tracking}px;
`;

const Fact = styled.div`
  line-height: 48px;
  font-size: 32px;
  letter-spacing: -0.4px;
`;

const FactName = styled.strong`
  margin-right: -2.4px;
  font-weight: 700;
  letter-spacing: -0.15px;
`;

const Link = styled.a`
  color: ${BLUE};
`;

const Check = styled.span`
  display: flex;
  align-items: center;
  justify-content: center;
  align-self: flex-end;
  width: 28px;
  height: 28px;
  margin-top: 12px;
  border-radius: 6px;
  background: #2f6dfd;
  box-shadow: inset 0 0 0 1px #2361f2;
`;

const Footer = styled.footer`
  flex: none;
  height: 94px;
  padding: 31px 0 0 326px;
  background: linear-gradient(#1d1c37, #1b1a2f);
  color: #81808f;
  font-size: 26px;
  line-height: 39px;
  letter-spacing: -0.24px;
`;

const SubmitButton = styled.button`
  position: absolute;
  top: 1260px;
  right: 22px;
  width: 154px;
  height: 76px;
  padding: 0;
  border: 0;
  border-radius: 8px;
  background: ${BLUE};
  color: #fff;
  font: 400 32px/76px ${SANS};
  letter-spacing: -0.6px;

  span {
    display: block;
    padding-top: 2px;
    line-height: 74px;
  }
`;

const Note = styled.p`
  position: absolute;
  top: 1096px;
  left: 2503px;
  margin: 0;
  color: #dc0b03;
  font: 700 36px/43px 'Liberation Sans', Arial, sans-serif;
  white-space: nowrap;
`;

const Arrow = styled.svg`
  position: absolute;
  top: 1190px;
  left: 2570px;
  width: 110px;
  height: 130px;
`;

const LogoSvg = styled.svg`
  display: block;
  width: 290px;
  height: 148px;
`;

/* letter, left edge, drawn width, face */
const LETTERS: [string, number, number, string][] = [
  ['T', 84, 110, 'DejaVu Sans'],
  ['I', 200, 94, 'DejaVu Sans Mono'],
  ['S', 295, 78, 'DejaVu Sans'],
  ['C', 374, 122, 'DejaVu Sans'],
  ['H', 497, 98, 'DejaVu Sans'],
];

function Logo() {
  const sky = '#2fc0ff';
  return (
    <LogoSvg viewBox="26 0 290 148">
      <defs>
        <filter id="chalk" x="-5%" y="-10%" width="110%" height="120%">
          <feTurbulence type="fractalNoise" baseFrequency="0.11" numOctaves="3" seed="4" result="n" />
          <feDisplacementMap in="SourceGraphic" in2="n" scale="22" xChannelSelector="R" yChannelSelector="G" />
        </filter>
      </defs>
      <g transform="scale(0.33333)">
        <g fill={sky} stroke={sky} strokeWidth={8} fontSize={158} filter="url(#chalk)">
          {LETTERS.map(([ch, x, w, face]) => (
            <text key={ch} x={x} y={272} textLength={w} lengthAdjust="spacingAndGlyphs" fontFamily={`'${face}', sans-serif`}>
              {ch}
            </text>
          ))}
        </g>
        <g fill="none" stroke={sky} strokeLinejoin="round" strokeLinecap="round">
          <path strokeWidth={5} d="M620 54C640 53 652 64 657 82C659 100 652 112 642 121C632 130 615 132 602 125C588 117 582 106 584 90C586 72 600 56 620 54Z" />
          <path strokeWidth={5} d="M686 241C664 247 646 260 638 279C634 300 635 318 644 332C658 348 676 360 695 361C716 360 734 348 742 333C751 316 755 304 756 291" />
          <path strokeWidth={11} d="M785 76C755 76 728 88 706 108C685 127 678 143 677 168C676 194 677 218 684 238C700 256 720 268 742 281C760 291 772 294 785 294C806 294 822 283 842 269C864 255 874 240 880 220C886 202 892 192 892 174C888 154 880 142 873 124C866 106 857 98 838 88C820 79 803 75 785 76Z" />
          <g strokeWidth={4.4}>
            <path d="M790 134C808 124 828 130 841 122C852 113 866 108 872 98C879 86 874 76 878 68C886 56 904 60 916 48" />
            <path d="M832 165C838 150 832 134 840 122C838 108 828 94 832 82C844 72 862 78 877 71C878 54 868 36 876 20" />
          </g>
          <g strokeWidth={3.2}>
            <path d="M790 134L832 165M800 130L836 154M812 128L836 144M824 127L838 136M834 82L872 108M845 77L876 96M858 77L877 88M836 94L862 112M838 106L850 116M876 20L916 48M873 30L906 54M874 42L896 58M876 54L886 62" />
          </g>
        </g>
        <g fill={sky}>
          <circle cx={780} cy={188} r={46} />
          <circle cx={623} cy={93} r={10} />
          <circle cx={695} cy={300} r={20} />
          <circle cx={824} cy={147} r={5} />
          <circle cx={885} cy={42} r={5} />
        </g>
      </g>
    </LogoSvg>
  );
}

/* ---------- content ---------- */
type Dataset = {
  name: string;
  tracking: number;
  plot: Plot;
  legend: { shift: number; pitch: number; size: number; items: [string, string][] };
  patients: string;
  cells: string;
  platform: string;
  paper: string;
};

const DATASETS: Dataset[] = [
  {
    name: 'LIHC_GSE140228_10X',
    tracking: -0.05,
    plot: plot10x,
    legend: {
      shift: 13,
      pitch: 29.58,
      size: 20.1,
      items: [
        ['B', C.orange], ['CD4Tconv', C.indigo], ['CD8T', C.teal], ['CD8Tex', C.green], ['DC', C.magenta], ['ILC', C.pine],
        ['Mast', C.gold], ['Mono/Macro', C.blue], ['NK', C.purple], ['Plasma', C.red], ['TMKI67', C.grey], ['Treg', C.olive],
      ],
    },
    patients: '5',
    cells: '62,530',
    platform: '10x Genomics',
    paper: 'Zhang Q, et al. Cell 2019',
  },
  {
    name: 'LIHC_GSE140228_Smartseq2',
    tracking: -0.68,
    plot: plotSmart,
    legend: {
      shift: 13,
      pitch: 29.58,
      size: 20.1,
      items: [
        ['B', C.orange], ['CD4Tconv', C.indigo], ['CD8Tex', C.teal], ['DC', C.green], ['ILC', C.magenta],
        ['Mast', C.pine], ['Mono/Macro', C.gold], ['NK', C.blue], ['Plasma', C.purple], ['TMKI67', C.red],
      ],
    },
    patients: '6',
    cells: '7,074',
    platform: 'Smart-seq2',
    paper: 'Zhang Q, et al. Cell 2019',
  },
  {
    name: 'LIHC_GSE98638',
    tracking: -0.3,
    plot: plotZheng,
    legend: {
      shift: 33.5,
      pitch: 30,
      size: 20.6,
      items: [
        ['CD4Tconv', C.orange], ['CD8T', C.indigo], ['CD8Tex', C.teal], ['Others', C.green], ['TMKI67', C.magenta], ['Treg', C.pine],
      ],
    },
    patients: '6',
    cells: '5,059',
    platform: 'Smart-seq2',
    paper: 'Zheng C, et al. Cell 2017',
  },
];

function DatasetCard({ data }: { data: Dataset }) {
  const facts: [string, React.ReactNode][] = [
    ['Species:', 'Human'],
    ['Treatment:', 'None'],
    ['Patient number:', data.patients],
    ['Cell number:', data.cells],
    ['Platform:', data.platform],
    ['Primary/Metastatic:', 'Primary'],
    ['Publication:', <Link key="paper">{data.paper}</Link>],
  ];
  return (
    <Card>
      <Figure $shift={data.legend.shift}>
        <ScatterPlot plot={data.plot} />
        <Legend $pitch={data.legend.pitch} $size={data.legend.size}>
          {data.legend.items.map(([label, color]) => (
            <LegendItem key={label} $color={color}>
              <span>{label}</span>
            </LegendItem>
          ))}
        </Legend>
      </Figure>
      <Body>
        <Title $tracking={data.tracking}>{data.name}</Title>
        {facts.map(([name, value]) => (
          <Fact key={name}>
            <FactName>{name}</FactName> {value}
          </Fact>
        ))}
        <Check>
          <svg width="28" height="28" viewBox="0 0 28 28" fill="none" stroke="#fff" strokeWidth="2.9" strokeLinecap="round" strokeLinejoin="round">
            <path d="M7.4 15.2L11.8 20.4L20.4 7.6" />
          </svg>
        </Check>
      </Body>
    </Card>
  );
}

export default function App() {
  return (
    <Page>
      <GlobalStyle />
      <Header>
        <Logo />
        <Nav>
          <NavLink>Home</NavLink>
          <NavLink $active>Dataset</NavLink>
          <NavLink>Gene</NavLink>
          <NavLink>Documentation</NavLink>
        </Nav>
      </Header>
      <Main>
        <Heading>Return 3 across 78 datasets</Heading>
        <Grid>
          {DATASETS.map((d) => (
            <DatasetCard key={d.name} data={d} />
          ))}
        </Grid>
      </Main>
      <Footer>Copyright @2020 TISCH project</Footer>
      <Note>
        Submit to compare
        <br />
        selected datasets
      </Note>
      <Arrow viewBox="0 0 110 130">
        <path d="M17.7 10C15 52 25 99 76 101" fill="none" stroke="#ff0000" strokeWidth="5.2" />
        <path d="M73.3 88.3L100 99.7L75.7 114.3Z" fill="#ff0000" />
      </Arrow>
      <SubmitButton>
        <span>Submit</span>
      </SubmitButton>
    </Page>
  );
}
